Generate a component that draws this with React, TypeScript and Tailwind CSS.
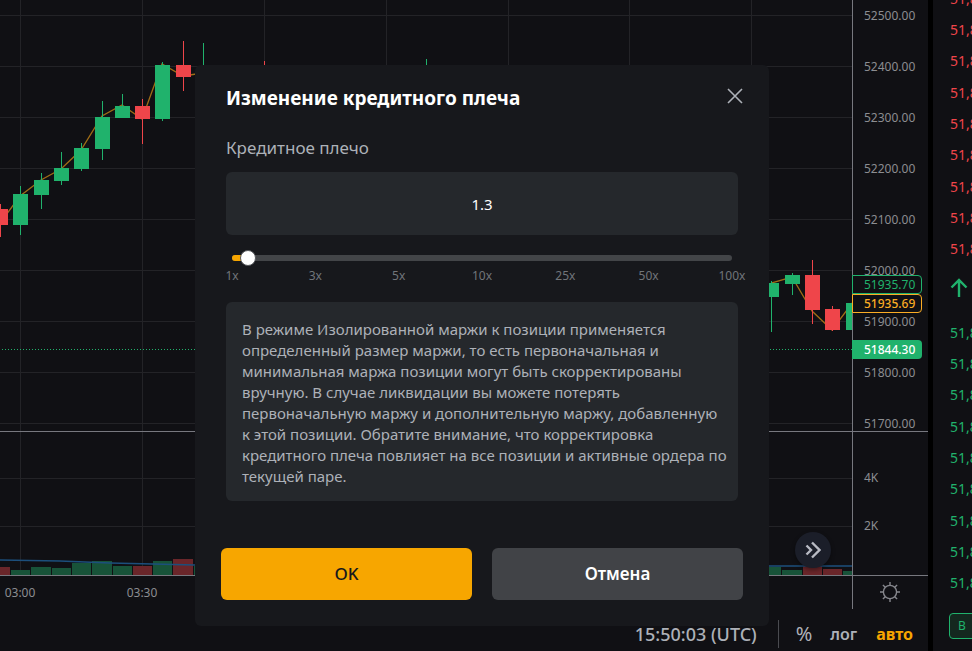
import { useState } from "react";

interface Candle {
  x: number;
  top: number;
  bottom: number;
  high: number;
  low: number;
  up: boolean;
}

const candles: Candle[] = [
  { x: 0, top: 209, bottom: 225, high: 204, low: 237, up: false },
  { x: 20, top: 194, bottom: 225, high: 186, low: 235, up: true },
  { x: 41, top: 180, bottom: 195, high: 173, low: 209, up: true },
  { x: 61, top: 168, bottom: 181, high: 152, low: 185, up: true },
  { x: 81, top: 148, bottom: 169, high: 143, low: 171, up: true },
  { x: 102, top: 117, bottom: 149, high: 101, low: 160, up: true },
  { x: 122, top: 106, bottom: 118, high: 94, low: 118, up: true },
  { x: 142, top: 106, bottom: 119, high: 99, low: 144, up: false },
  { x: 162, top: 65, bottom: 119, high: 62, low: 121, up: true },
  { x: 183, top: 65, bottom: 77, high: 41, low: 91, up: false },
  { x: 203, top: 70, bottom: 74, high: 43, low: 80, up: true },
  { x: 264, top: 70, bottom: 90, high: 61, low: 96, up: false },
  { x: 426, top: 70, bottom: 90, high: 59, low: 96, up: true },
  { x: 771, top: 283, bottom: 297, high: 281, low: 332, up: true },
  { x: 792, top: 275, bottom: 284, high: 273, low: 295, up: true },
  { x: 812, top: 275, bottom: 310, high: 260, low: 324, up: false },
  { x: 832, top: 309, bottom: 330, high: 306, low: 331, up: false },
  { x: 853, top: 303, bottom: 330, high: 303, low: 330, up: true },
];

// heights are measured from the bottom of the volume pane
const volumes = [
  { x: -10, w: 20, h: 8, up: false },
  { x: 11, w: 19, h: 5, up: true },
  { x: 31, w: 20, h: 8, up: true },
  { x: 52, w: 19, h: 7, up: true },
  { x: 72, w: 19, h: 12, up: true },
  { x: 92, w: 20, h: 14, up: true },
  { x: 113, w: 19, h: 9, up: true },
  { x: 133, w: 19, h: 9, up: false },
  { x: 153, w: 19, h: 14, up: true },
  { x: 173, w: 20, h: 16, up: false },
  { x: 194, w: 19, h: 9, up: true },
  { x: 762, w: 19, h: 8, up: true },
  { x: 782, w: 20, h: 5, up: true },
  { x: 803, w: 19, h: 9, up: false },
  { x: 823, w: 19, h: 6, up: false },
  { x: 843, w: 20, h: 4, up: true },
];

const gridX = [20, 142, 264, 386, 508, 629, 751];
const gridY = [15, 66, 117, 168, 219, 270, 321, 372, 423];
const prices = [
  "52500.00",
  "52400.00",
  "52300.00",
  "52200.00",
  "52100.00",
  "52000.00",
  "51900.00",
  "51800.00",
  "51700.00",
];
const times = ["03:00", "03:30"];
const asks = ["51,892.5", "51,889.0", "51,886.5", "51,884.0", "51,880.5", "51,878.0", "51,874.5", "51,871.0", "51,868.5"];
const bids = ["51,844.0", "51,842.5", "51,840.0", "51,838.5", "51,836.0", "51,834.5", "51,831.0", "51,828.5", "51,826.0"];

const stops = [1, 3, 5, 10, 25, 50, 100];

function leverageAt(pos: number) {
  const i = Math.min(Math.floor(pos / 100), stops.length - 2);
  const value = stops[i] + ((pos - i * 100) / 100) * (stops[i + 1] - stops[i]);
  return String(Math.floor(value * 10) / 10);
}

function PriceChart() {
  return (
    <svg className="block h-full w-full" aria-hidden="true" shapeRendering="crispEdges">
      {gridX.map((x) => (
        <rect key={x} x={x} y={0} width={1} height="100%" fill="#232327" />
      ))}
      {gridY.map((y) => (
        <rect key={y} x={0} y={y} width="100%" height={1} fill="#232327" />
      ))}
      <g fill="none" stroke="#a06d16" strokeWidth={1.3} shapeRendering="auto">
        <polyline points="0,223 20,196 41,180 61,169 81,150 102,116 122,105 142,119 162,64 183,76 203,73" />
        <polyline points="771,283 792,277 812,311 832,330 853,302" />
      </g>
      {candles.map((c) => (
        <g key={c.x} fill={c.up ? "#20b26c" : "#ef454a"}>
          <rect x={c.x} y={c.high} width={1} height={c.low - c.high} />
          <rect x={c.x - 7} y={c.top} width={15} height={c.bottom - c.top} />
        </g>
      ))}
      <line x1={2} x2="100%" y1={349.5} y2={349.5} stroke="#20b26c" strokeDasharray="1 2" />
    </svg>
  );
}

function VolumeChart() {
  return (
    <svg className="block h-full w-full" aria-hidden="true" shapeRendering="crispEdges">
      {gridX.map((x) => (
        <rect key={x} x={x} y={0} width={1} height="100%" fill="#232327" />
      ))}
      <rect x={0} y={46} width="100%" height={1} fill="#232327" />
      <rect x={0} y={94} width="100%" height={1} fill="#232327" />
      {volumes.map((v) => (
        <rect key={v.x} x={v.x} y={143 - v.h} width={v.w} height={v.h} fill={v.up ? "#185339" : "#6a262a"} />
      ))}
      <polyline
        points="0,128 60,129 110,131 195,133 500,135 769,134 860,134"
        fill="none"
        stroke="#1c4f7c"
        strokeWidth={1.4}
        shapeRendering="auto"
      />
    </svg>
  );
}

function GearIcon() {
  return (
    <svg width="20" height="20" viewBox="0 0 20 20" fill="none" stroke="#85868c" strokeWidth="1.4">
      <circle cx="10" cy="10" r="6.6" />
      <path d="M10 0v3.4M10 16.6V20M0 10h3.4M16.6 10H20M2.9 2.9l2.4 2.4M14.7 14.7l2.4 2.4M2.9 17.1l2.4-2.4M14.7 5.3l2.4-2.4" />
    </svg>
  );
}

function OrderBook() {
  return (
    <aside className="flex w-[39px] shrink-0 flex-col overflow-hidden bg-[#101014] pl-[17px] text-sm">
      <ul className="-mt-[17px] flex h-[282px] shrink-0 flex-col text-[#ef454a]">
        {asks.map((p) => (
          <li key={p} className="flex flex-1 items-center">{p}</li>
        ))}
      </ul>
      <div className="flex h-[52px] shrink-0 items-center pb-1.5">
        <svg className="shrink-0" width="18" height="20" viewBox="0 0 18 20" fill="none" stroke="#20b26c" strokeWidth="2.4">
          <path d="M9 19V3M1.5 9.5 9 2l7.500 7.500" />
        </svg>
      </div>
      <ul className="flex h-[282px] shrink-0 flex-col text-[#20b26c]">
        {bids.map((p) => (
          <li key={p} className="flex flex-1 items-center">{p}</li>
        ))}
      </ul>
      <div className="-ml-px mt-3.5 flex h-[26px] w-12 shrink-0 items-center rounded-sm border border-[#20b26c] bg-[#14281f] pl-2 text-xs text-[#20b26c]">
        B
      </div>
    </aside>
  );
}

function ChartPanel() {
  return (
    <main className="flex min-w-0 flex-1 flex-col bg-[#101014] text-xs text-[#8c8d91]">
      {/* Price pane */}
      <section className="flex h-[432px] border-b border-[#77787f]">
        <div className="min-w-0 flex-1 overflow-hidden">
          <PriceChart />
        </div>
        <div className="relative w-[76px] border-l border-[#77787f]">
          <ul className="-mt-[10px]">
            {prices.map((p) => (
              <li key={p} className="flex h-[51px] items-center pl-[11px]">{p}</li>
            ))}
          </ul>
          <span className="absolute -left-px top-[275px] flex h-[19px] w-[70px] items-center rounded-r-sm border border-[#20b26c] bg-[#101014] pl-[11px] text-[#20b26c]">
            51935.70
          </span>
          <span className="absolute -left-px top-[294px] flex h-[19px] w-[70px] items-center rounded-r-sm border border-[#fbac24] bg-[#101014] pl-[11px] font-medium text-[#fbac24]">
            51935.69
          </span>
          <span className="absolute -left-px top-[340px] flex h-[19px] w-[70px] items-center rounded-r-sm bg-[#20b26c] pl-3 font-medium text-white">
            51844.30
          </span>
        </div>
      </section>

      {/* Volume pane */}
      <section className="flex h-36 border-b border-[#77787f]">
        <div className="relative min-w-0 flex-1">
          <VolumeChart />
          <button
            aria-label="К последней свече"
            className="absolute bottom-[7px] right-[21px] flex size-9 items-center justify-center rounded-full bg-[#1b1e29] shadow-[0_2px_4px_rgba(0,0,0,0.4)]"
          >
            <svg width="16" height="18" viewBox="0 0 16 18" fill="none" stroke="#b8bac3" strokeWidth="2.4">
              <path d="M1.500 4.500 6 9l-4.500 4.500M7 1.500 14.500 9 7 16.500" />
            </svg>
          </button>
        </div>
        <div className="w-[76px] border-l border-[#77787f] pl-[11px] pt-[22px]">
          <div className="flex h-12 items-center">4K</div>
          <div className="flex h-12 items-center">2K</div>
        </div>
      </section>

      {/* Time axis */}
      <section className="flex h-[33px]">
        <div className="flex min-w-0 flex-1 overflow-hidden">
          <div className="-ml-[41px] flex">
            {times.map((t) => (
              <span key={t} className="flex w-[122px] items-center justify-center">{t}</span>
            ))}
          </div>
        </div>
        <div className="flex w-[76px] items-center justify-center border-l border-[#77787f] pb-0.5 pr-0.5">
          <button aria-label="Настройки">
            <GearIcon />
          </button>
        </div>
      </section>

      {/* Bottom toolbar */}
      <footer className="flex flex-1 items-center justify-end pr-[15px] pt-2 text-base font-medium text-[#adb1b8]">
        <span className="text-lg">15:50:03 (UTC)</span>
        <span className="ml-[21px] h-7 w-px bg-[#4a4b50]" />
        <button className="ml-[17px] text-xl font-normal">%</button>
        <button className="ml-[18px] font-semibold">лог</button>
        <button className="ml-[19px] font-bold text-[#f7a600]">авто</button>
      </footer>
    </main>
  );
}

function LeverageDialog() {
  const [pos, setPos] = useState(19);

  return (
    <div
      role="dialog"
      aria-labelledby="leverage-title"
      className="w-[574px] rounded-md bg-[#17181c] px-[26px] pb-[26px] pt-[17px]"
    >
      <div className="px-[5px]">
        <div className="flex h-8 items-center justify-between">
          <h2 id="leverage-title" className="text-[19px] font-bold text-white">
            Изменение кредитного плеча
          </h2>
          <button aria-label="Закрыть" className="-mr-[11px] self-start p-1.5">
            <svg width="16" height="16" viewBox="0 0 16 16" fill="none" stroke="#adb1b8" strokeWidth="1.6">
              <path d="M1 1l14 14M15 1L1 15" />
            </svg>
          </button>
        </div>

        <label htmlFor="leverage" className="mt-5 block text-[17px] leading-7 text-[#adb1b8]">
          Кредитное плечо
        </label>
        <input
          id="leverage"
          readOnly
          value={leverageAt(pos)}
          className="mt-[10px] block h-[63px] w-full rounded-md bg-[#25282c] text-center text-[15px] text-white outline-none"
        />

        {/* Slider */}
        <div className="mt-[14px] grid h-[18px] items-center">
          <div className="col-start-1 row-start-1 mx-1.5 h-1.5 overflow-hidden rounded-full bg-[#434548]">
            <div className="h-full bg-[#f7a600]" style={{ width: `${pos / 6}%` }} />
          </div>
          <input
            type="range"
            aria-label="Кредитное плечо"
            min={0}
            max={600}
            value={pos}
            onChange={(e) => setPos(Number(e.target.value))}
            className="z-10 col-start-1 row-start-1 -mx-0.5 h-4 cursor-pointer appearance-none bg-transparent [&::-webkit-slider-thumb]:size-4 [&::-webkit-slider-thumb]:appearance-none [&::-webkit-slider-thumb]:rounded-full [&::-webkit-slider-thumb]:border [&::-webkit-slider-thumb]:border-[#55575b] [&::-webkit-slider-thumb]:bg-white"
          />
        </div>
        <div className="flex justify-between px-1.5 text-xs leading-[18px] text-[#71757a]">
          {stops.map((s) => (
            <span key={s} className="flex w-0 justify-center">{s}x</span>
          ))}
        </div>

        <p className="mt-[17px] rounded-md bg-[#25282c] pb-[14px] pl-4 pr-2 pt-[17px] text-[15px] leading-[21px] text-[#adb1b8]">
          В режиме Изолированной маржи к позиции применяется определенный размер маржи, то есть первоначальная и
          минимальная маржа позиции могут быть скорректированы вручную. В случае ликвидации вы можете потерять
          первоначальную маржу и дополнительную маржу, добавленную к&nbsp;этой позиции. Обратите внимание, что
          корректировка кредитного плеча повлияет на все позиции и активные ордера по текущей паре.
        </p>
      </div>

      <div className="mt-[47px] grid grid-cols-2 gap-5 text-[17px]">
        <button className="h-[52px] rounded-md bg-[#f7a600] font-medium text-[#17181c]">OK</button>
        <button className="h-[52px] rounded-md bg-[#414347] font-semibold text-white">Отмена</button>
      </div>
    </div>
  );
}

export default function App() {
  return (
    <div className="relative flex h-screen overflow-hidden bg-black font-['Noto_Sans',sans-serif]">
      <ChartPanel />
      <div className="w-[5px] shrink-0 bg-black" />
      <OrderBook />
      <div className="absolute inset-0 flex items-start justify-center pr-2 pt-[65px]">
        <LeverageDialog />
      </div>
    </div>
  );
}
